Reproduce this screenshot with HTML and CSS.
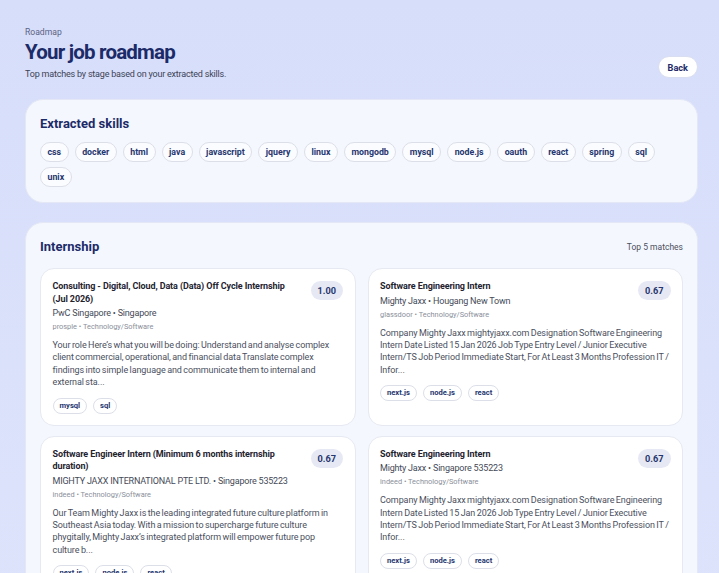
FILE: index.html
```html
<!DOCTYPE html>
<html lang="en">
<head>
    <meta charset="UTF-8">
    <meta name="viewport" content="width=device-width, initial-scale=1.0">
    <title>Your job roadmap</title>
    <link rel="stylesheet" href="styles.css">
</head>
<body>
    <main class="page">
        <!-- Page header -->
        <header class="page-head">
            <div>
                <p class="eyebrow">Roadmap</p>
                <h1 class="title">Your job roadmap</h1>
                <p class="subtitle">Top matches by stage based on your extracted skills.</p>
            </div>
            <button class="back-btn" type="button">Back</button>
        </header>

        <!-- Skills pulled from the resume -->
        <section class="panel">
            <h2 class="panel-title">Extracted skills</h2>
            <ul class="chips">
                <li class="chip">css</li>
                <li class="chip">docker</li>
                <li class="chip">html</li>
                <li class="chip">java</li>
                <li class="chip">javascript</li>
                <li class="chip">jquery</li>
                <li class="chip">linux</li>
                <li class="chip">mongodb</li>
                <li class="chip">mysql</li>
                <li class="chip">node.js</li>
                <li class="chip">oauth</li>
                <li class="chip">react</li>
                <li class="chip">spring</li>
                <li class="chip">sql</li>
                <li class="chip">unix</li>
            </ul>
        </section>

        <!-- Internship stage -->
        <section class="panel">
            <div class="panel-head">
                <h2 class="panel-title">Internship</h2>
                <span class="panel-meta">Top 5 matches</span>
            </div>
            <div class="jobs">
                <article class="job">
                    <div class="job-top">
                        <div>
                            <h3 class="job-title">Consulting - Digital, Cloud, Data (Data) Off Cycle Internship (Jul 2026)</h3>
                            <p class="job-company">PwC Singapore • Singapore</p>
                            <p class="job-source">prosple • Technology/Software</p>
                        </div>
                        <span class="score">1.00</span>
                    </div>
                    <p class="job-desc">Your role Here’s what you will be doing: Understand and analyse complex client commercial, operational, and financial data Translate complex findings into simple language and communicate them to internal and external sta...</p>
                    <ul class="chips chips-sm">
                        <li class="chip">mysql</li>
                        <li class="chip">sql</li>
                    </ul>
                </article>
                <article class="job">
                    <div class="job-top">
                        <div>
                            <h3 class="job-title">Software Engineering Intern</h3>
                            <p class="job-company">Mighty Jaxx • Hougang New Town</p>
                            <p class="job-source">glassdoor • Technology/Software</p>
                        </div>
                        <span class="score">0.67</span>
                    </div>
                    <p class="job-desc">Company Mighty Jaxx mightyjaxx.com Designation Software Engineering Intern Date Listed 15 Jan 2026 Job Type Entry Level / Junior Executive Intern/TS Job Period Immediate Start, For At Least 3 Months Profession IT / Infor...</p>
                    <ul class="chips chips-sm">
                        <li class="chip">next.js</li>
                        <li class="chip">node.js</li>
                        <li class="chip">react</li>
                    </ul>
                </article>
                <article class="job">
                    <div class="job-top">
                        <div>
                            <h3 class="job-title">Software Engineer Intern (Minimum 6 months internship duration)</h3>
                            <p class="job-company">MIGHTY JAXX INTERNATIONAL PTE LTD. • Singapore 535223</p>
                            <p class="job-source">indeed • Technology/Software</p>
                        </div>
                        <span class="score">0.67</span>
                    </div>
                    <p class="job-desc">Our Team Mighty Jaxx is the leading integrated future culture platform in Southeast Asia today. With a mission to supercharge future culture phygitally, Mighty Jaxx’s integrated platform will empower future pop culture b...</p>
                    <ul class="chips chips-sm">
                        <li class="chip">next.js</li>
                        <li class="chip">node.js</li>
                        <li class="chip">react</li>
                    </ul>
                </article>
                <article class="job">
                    <div class="job-top">
                        <div>
                            <h3 class="job-title">Software Engineering Intern</h3>
                            <p class="job-company">Mighty Jaxx • Singapore 535223</p>
                            <p class="job-source">indeed • Technology/Software</p>
                        </div>
                        <span class="score">0.67</span>
                    </div>
                    <p class="job-desc">Company Mighty Jaxx mightyjaxx.com Designation Software Engineering Intern Date Listed 15 Jan 2026 Job Type Entry Level / Junior Executive Intern/TS Job Period Immediate Start, For At Least 3 Months Profession IT / Infor...</p>
                    <ul class="chips chips-sm">
                        <li class="chip">next.js</li>
                        <li class="chip">node.js</li>
                        <li class="chip">react</li>
                    </ul>
                </article>
            </div>
        </section>
    </main>
</body>
</html>
```

FILE: styles.css
```css
/* Base page */
body {
    margin: 0;
    background: linear-gradient(180deg, #d7defa 0%, #dde3fb 100%);
    font-family: "Roboto", "Liberation Sans", sans-serif;
    color: #1f2330;
    min-height: 100vh;
}

p, h1, h2, h3, ul {
    margin: 0;
    padding: 0;
}

.page {
    padding: 27px 21px 0 25px;
    display: flex;
    flex-direction: column;
}

/* Header */
.page-head {
    display: flex;
    justify-content: space-between;
    align-items: flex-end;
    margin-bottom: 19px;
}

.eyebrow {
    font-size: 8.6px;
    color: #5b6384;
    line-height: 11px;
}

.title {
    font-size: 20.5px;
    font-weight: 700;
    color: #1c2b68;
    line-height: 26px;
    margin-top: 1px;
    letter-spacing: -0.8px;
}

.subtitle {
    font-size: 9px;
    letter-spacing: -0.2px;
    color: #3d4356;
    line-height: 12px;
    margin-top: 3px;
}

.back-btn {
    font-family: inherit;
    font-size: 9.2px;
    font-weight: 700;
    color: #1c2b68;
    background: #fff;
    border: 1px solid #d9def0;
    border-radius: 11px;
    padding: 0 9px;
    height: 22px;
    margin-bottom: 2px;
    cursor: pointer;
}

/* Panels */
.panel {
    background: #f5f7fe;
    border: 1px solid #e4e8f6;
    border-radius: 18px;
    padding: 14px 14px 15px;
}

.panel + .panel {
    margin-top: 19px;
}

.panel-head {
    display: flex;
    justify-content: space-between;
    align-items: center;
}

.panel-title {
    font-size: 13px;
    font-weight: 700;
    color: #1c2b68;
    line-height: 20px;
}

.panel-meta {
    font-size: 8.5px;
    color: #4b5060;
}

/* Skill chips */
.chips {
    list-style: none;
    display: flex;
    flex-wrap: wrap;
    gap: 5px 6px;
    margin-top: 8px;
}

.chip {
    font-size: 8.8px;
    font-weight: 700;
    color: #26366e;
    background: #fbfcff;
    border: 1px solid #dcdfe8;
    border-radius: 10px;
    height: 18px;
    line-height: 18px;
    padding: 0 6.5px;
}

.chips-sm {
    margin-top: 9px;
}

.chips-sm .chip {
    font-size: 7.6px;
    height: 14px;
    line-height: 14px;
    padding: 0 6px;
    background: #fff;
}

/* Job cards */
.jobs {
    display: grid;
    grid-template-columns: 1fr 1fr;
    gap: 10px 12px;
    margin-top: 11px;
}

.job {
    background: #fff;
    border: 1px solid #e6e9f2;
    border-radius: 14px;
    padding: 11px 11.5px;
}

.job-top {
    display: flex;
    justify-content: space-between;
    align-items: flex-start;
    gap: 12px;
}

.job-title {
    font-size: 9px;
    letter-spacing: -0.1px;
    font-weight: 700;
    color: #1f2330;
    line-height: 12.5px;
}

.score {
    flex: none;
    font-size: 9.2px;
    font-weight: 700;
    color: #26366e;
    background: #e6e9f4;
    border-radius: 10px;
    height: 19px;
    line-height: 19px;
    padding: 0 7px;
    margin-top: 1px;
}

.job-company {
    font-size: 9px;
    letter-spacing: -0.2px;
    color: #454a57;
    line-height: 14px;
    margin-top: 1px;
}

.job-source {
    font-size: 7.4px;
    color: #8a8f9a;
    line-height: 12px;
    margin-top: 1px;
}

.job-desc {
    font-size: 9px;
    letter-spacing: -0.08px;
    word-spacing: -0.7px;
    color: #4b5060;
    line-height: 12.4px;
    margin-top: 6px;
}
```
